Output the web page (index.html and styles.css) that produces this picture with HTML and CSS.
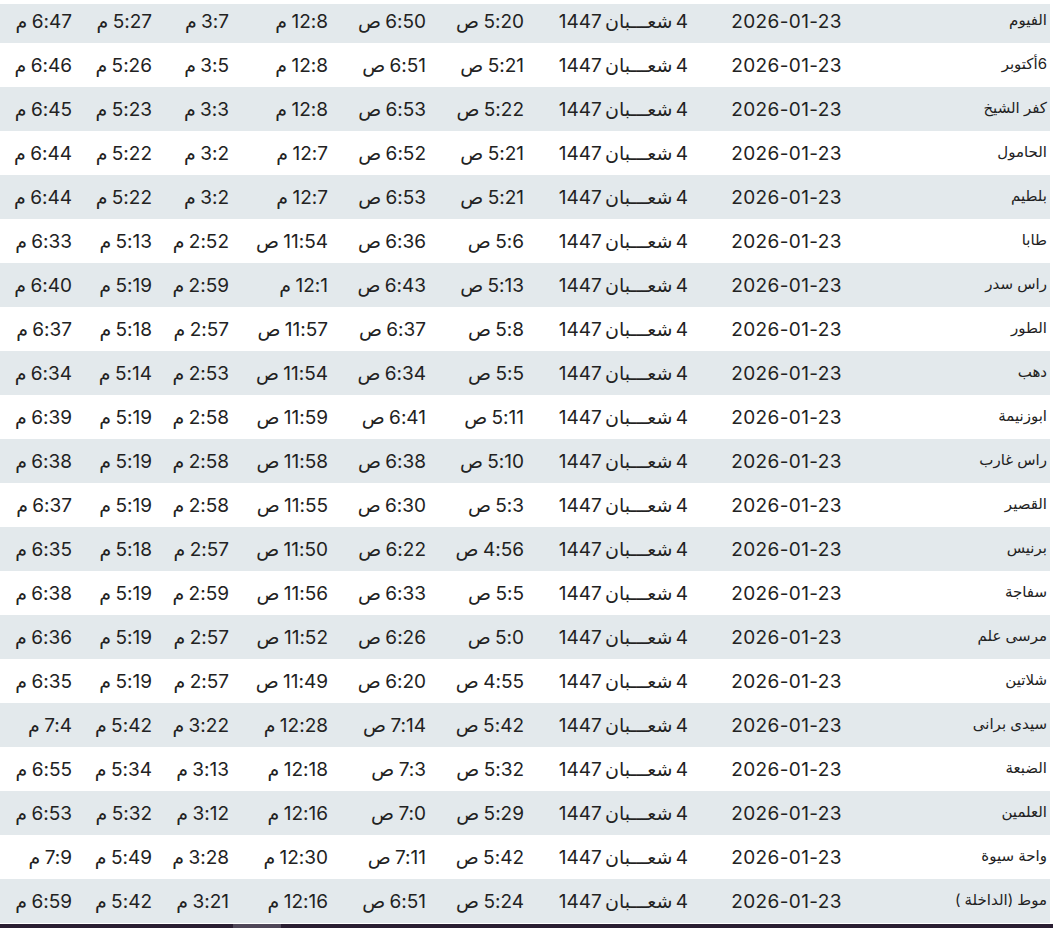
FILE: index.html
```html
<!DOCTYPE html>
<html lang="ar" dir="rtl">
<head>
<meta charset="utf-8">
<title>مواقيت الصلاة</title>
<link rel="stylesheet" href="styles.css">
</head>
<body>
<div class="page">
<table class="times">
<colgroup>
<col class="c-city"><col class="c-date"><col class="c-hijri"><col class="c-t1"><col class="c-t2"><col class="c-t3"><col class="c-t4"><col class="c-t5"><col class="c-t6">
</colgroup>
<tbody>
<tr><td class="city">الفيوم</td><td>2026-01-23</td><td class="hijri">4 شعـــبان 1447</td><td>5:20 ص</td><td>6:50 ص</td><td>12:8 م</td><td>3:7 م</td><td>5:27 م</td><td>6:47 م</td></tr>
<tr><td class="city">6أكتوبر</td><td>2026-01-23</td><td class="hijri">4 شعـــبان 1447</td><td>5:21 ص</td><td>6:51 ص</td><td>12:8 م</td><td>3:5 م</td><td>5:26 م</td><td>6:46 م</td></tr>
<tr><td class="city">كفر الشيخ</td><td>2026-01-23</td><td class="hijri">4 شعـــبان 1447</td><td>5:22 ص</td><td>6:53 ص</td><td>12:8 م</td><td>3:3 م</td><td>5:23 م</td><td>6:45 م</td></tr>
<tr><td class="city">الحامول</td><td>2026-01-23</td><td class="hijri">4 شعـــبان 1447</td><td>5:21 ص</td><td>6:52 ص</td><td>12:7 م</td><td>3:2 م</td><td>5:22 م</td><td>6:44 م</td></tr>
<tr><td class="city">بلطيم</td><td>2026-01-23</td><td class="hijri">4 شعـــبان 1447</td><td>5:21 ص</td><td>6:53 ص</td><td>12:7 م</td><td>3:2 م</td><td>5:22 م</td><td>6:44 م</td></tr>
<tr><td class="city">طابا</td><td>2026-01-23</td><td class="hijri">4 شعـــبان 1447</td><td>5:6 ص</td><td>6:36 ص</td><td>11:54 ص</td><td>2:52 م</td><td>5:13 م</td><td>6:33 م</td></tr>
<tr><td class="city">راس سدر</td><td>2026-01-23</td><td class="hijri">4 شعـــبان 1447</td><td>5:13 ص</td><td>6:43 ص</td><td>12:1 م</td><td>2:59 م</td><td>5:19 م</td><td>6:40 م</td></tr>
<tr><td class="city">الطور</td><td>2026-01-23</td><td class="hijri">4 شعـــبان 1447</td><td>5:8 ص</td><td>6:37 ص</td><td>11:57 ص</td><td>2:57 م</td><td>5:18 م</td><td>6:37 م</td></tr>
<tr><td class="city">دهب</td><td>2026-01-23</td><td class="hijri">4 شعـــبان 1447</td><td>5:5 ص</td><td>6:34 ص</td><td>11:54 ص</td><td>2:53 م</td><td>5:14 م</td><td>6:34 م</td></tr>
<tr><td class="city">ابوزنيمة</td><td>2026-01-23</td><td class="hijri">4 شعـــبان 1447</td><td>5:11 ص</td><td>6:41 ص</td><td>11:59 ص</td><td>2:58 م</td><td>5:19 م</td><td>6:39 م</td></tr>
<tr><td class="city">راس غارب</td><td>2026-01-23</td><td class="hijri">4 شعـــبان 1447</td><td>5:10 ص</td><td>6:38 ص</td><td>11:58 ص</td><td>2:58 م</td><td>5:19 م</td><td>6:38 م</td></tr>
<tr><td class="city">القصير</td><td>2026-01-23</td><td class="hijri">4 شعـــبان 1447</td><td>5:3 ص</td><td>6:30 ص</td><td>11:55 ص</td><td>2:58 م</td><td>5:19 م</td><td>6:37 م</td></tr>
<tr><td class="city">برنيس</td><td>2026-01-23</td><td class="hijri">4 شعـــبان 1447</td><td>4:56 ص</td><td>6:22 ص</td><td>11:50 ص</td><td>2:57 م</td><td>5:18 م</td><td>6:35 م</td></tr>
<tr><td class="city">سفاجة</td><td>2026-01-23</td><td class="hijri">4 شعـــبان 1447</td><td>5:5 ص</td><td>6:33 ص</td><td>11:56 ص</td><td>2:59 م</td><td>5:19 م</td><td>6:38 م</td></tr>
<tr><td class="city">مرسى علم</td><td>2026-01-23</td><td class="hijri">4 شعـــبان 1447</td><td>5:0 ص</td><td>6:26 ص</td><td>11:52 ص</td><td>2:57 م</td><td>5:19 م</td><td>6:36 م</td></tr>
<tr><td class="city">شلاتين</td><td>2026-01-23</td><td class="hijri">4 شعـــبان 1447</td><td>4:55 ص</td><td>6:20 ص</td><td>11:49 ص</td><td>2:57 م</td><td>5:19 م</td><td>6:35 م</td></tr>
<tr><td class="city">سيدى برانى</td><td>2026-01-23</td><td class="hijri">4 شعـــبان 1447</td><td>5:42 ص</td><td>7:14 ص</td><td>12:28 م</td><td>3:22 م</td><td>5:42 م</td><td>7:4 م</td></tr>
<tr><td class="city">الضبعة</td><td>2026-01-23</td><td class="hijri">4 شعـــبان 1447</td><td>5:32 ص</td><td>7:3 ص</td><td>12:18 م</td><td>3:13 م</td><td>5:34 م</td><td>6:55 م</td></tr>
<tr><td class="city">العلمين</td><td>2026-01-23</td><td class="hijri">4 شعـــبان 1447</td><td>5:29 ص</td><td>7:0 ص</td><td>12:16 م</td><td>3:12 م</td><td>5:32 م</td><td>6:53 م</td></tr>
<tr><td class="city">واحة سيوة</td><td>2026-01-23</td><td class="hijri">4 شعـــبان 1447</td><td>5:42 ص</td><td>7:11 ص</td><td>12:30 م</td><td>3:28 م</td><td>5:49 م</td><td>7:9 م</td></tr>
<tr><td class="city">موط (الداخلة )</td><td>2026-01-23</td><td class="hijri">4 شعـــبان 1447</td><td>5:24 ص</td><td>6:51 ص</td><td>12:16 م</td><td>3:21 م</td><td>5:42 م</td><td>6:59 م</td></tr>
</tbody>
</table>
<div class="footer-bar"><div class="footer-thumb"></div></div>
</div>
</body>
</html>
```

FILE: styles.css
```css
html, body {
  margin: 0;
  padding: 0;
  background: #ffffff;
}
body {
  font-family: "Inter", "DejaVu Sans", sans-serif;
  color: #222222;
  overflow: hidden;
}
.page {
  width: 1053px;
  direction: ltr;
}
.times {
  direction: rtl;
  width: 1050px;
  table-layout: fixed;
  border-collapse: collapse;
  margin-top: -1px;
  font-size: 19px;
  letter-spacing: 0.4px;
  word-spacing: -1px;
}
.c-city { width: 205px; }
.c-date { width: 154px; }
.c-hijri { width: 164px; }
.c-t1 { width: 98px; }
.c-t2 { width: 98px; }
.c-t3 { width: 99px; }
.c-t4 { width: 77px; }
.c-t5 { width: 80px; }
.c-t6 { width: 75px; }
.times td {
  height: 44px;
  padding: 0 3px 0 0;
  text-align: right;
  white-space: nowrap;
  vertical-align: middle;
  box-sizing: border-box;
}
.times tr:nth-child(odd) td {
  background: #e3e9ec;
}
.times tr:first-child td {
  background: linear-gradient(#ffffff 5px, #e3e9ec 5px);
}
.times td.hijri {
  word-spacing: -2px;
  letter-spacing: 0.2px;
}
.times td.city {
  font-size: 15px;
  letter-spacing: 0;
  word-spacing: 0;
  padding-bottom: 4px;
}
.footer-bar {
  height: 5px;
  margin-top: 1px;
  background: #2a1e32;
  display: flex;
}
.footer-thumb {
  width: 48px;
  margin-left: 233px;
  background: #4f4758;
}
```
